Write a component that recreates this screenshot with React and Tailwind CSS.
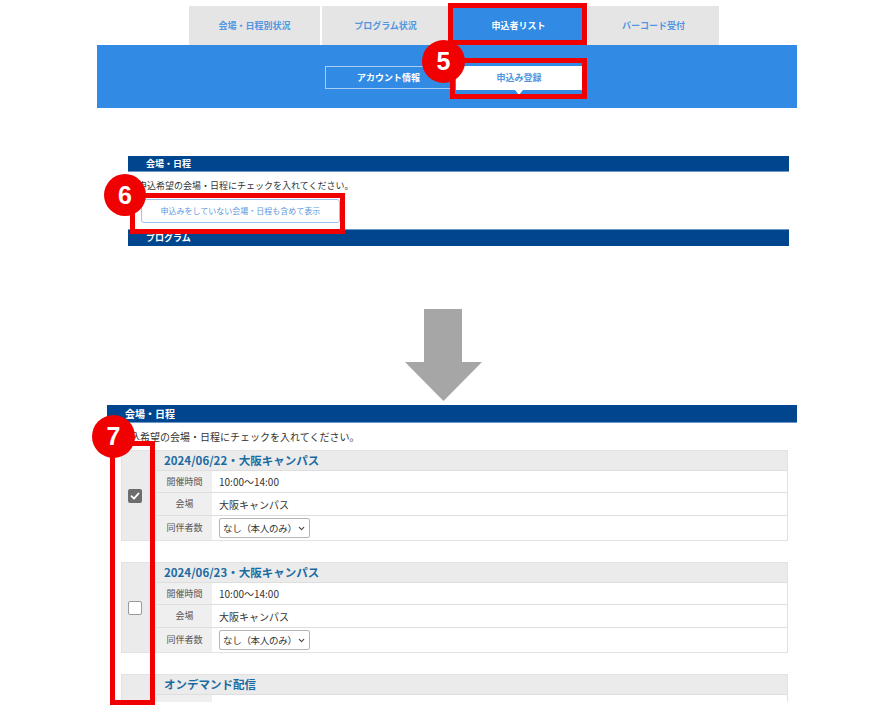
import React from 'react';
import { ChevronDown } from 'lucide-react';

const tabs = [
  { label: '会場・日程別状況', w: 'w-[131px]' },
  { label: 'プログラム状況', w: 'w-[127px]' },
  { label: '申込者リスト', w: 'w-[131px]', active: true },
  { label: 'バーコード受付', w: 'w-[131px]' },
];

function Marker({ n, className }) {
  return (
    <div className={`absolute rounded-full bg-[#f00000] text-white flex items-center justify-center font-['Liberation_Sans',Arial,sans-serif] font-bold text-[25px] leading-none ${className}`}>
      {n}
    </div>
  );
}

function CheckBox({ checked }) {
  if (checked) {
    return (
      <div className="w-[14px] h-[14px] rounded-[2px] bg-[#6d6d6d] flex items-center justify-center">
        <svg width="10" height="10" viewBox="0 0 10 10">
          <path d="M1.5 5.2 L4 7.6 L8.6 2.4" fill="none" stroke="#fff" strokeWidth="1.8" strokeLinecap="round" strokeLinejoin="round" />
        </svg>
      </div>
    );
  }
  return <div className="w-[14px] h-[14px] rounded-[2px] bg-white border border-[#9a9a9a]" />;
}

function Row({ label, children, h = 'h-[22px]', last }) {
  return (
    <div className={`flex ${h} ${last ? '' : 'border-b border-[#dedede]'}`}>
      <div className="w-[55px] shrink-0 bg-[#efefef] flex items-center justify-center text-[9px] text-[#555]">{label}</div>
      <div className="flex-1 bg-white flex items-center pl-[7px] text-[10px] text-[#333]">{children}</div>
    </div>
  );
}

function VenueCard({ title, checked, cut }) {
  return (
    <div className="flex w-[667px] bg-[#ebebeb] border border-[#e2e2e2]">
      <div className="w-[35px] shrink-0 flex items-center pl-[6px]">
        {!cut && <CheckBox checked={checked} />}
      </div>
      <div className="flex-1 flex flex-col">
        <div className="h-[20px] flex items-center pl-[7px] text-[11.5px] font-bold text-[#1b6ba3] border-b border-[#dedede]">{title}</div>
        {cut ? (
          <Row label="" h="h-[22px]" last>{''}</Row>
        ) : (
          <>
            <Row label="開催時間">10:00〜14:00</Row>
            <Row label="会場" h="h-[23px]">大阪キャンパス</Row>
            <Row label="同伴者数" h="h-[24px]" last>
              <div className="w-[91px] h-[20px] border border-[#b5b5b5] rounded-[2px] bg-white flex items-center justify-between pl-[3px] pr-[3px] text-[9.5px] text-[#333] whitespace-nowrap">
                <span className="tracking-[-0.3px]">なし（本人のみ）</span>
                <ChevronDown className="w-[9px] h-[9px] shrink-0 text-[#444]" strokeWidth={3} />
              </div>
            </Row>
          </>
        )}
      </div>
    </div>
  );
}

export default function App() {
  return (
    <div className="relative w-[894px] h-[720px] bg-white overflow-hidden font-['Noto_Sans_CJK_JP','Noto_Sans',sans-serif]">
      <div className="h-[702px] overflow-hidden">
        {/* top tabs */}
        <div className="flex pl-[189px] pt-[6px] gap-[2px]">
          {tabs.map((t, i) => (
            <div
              key={t.label}
              className={`${t.w} h-[39px] flex items-center justify-center text-[9px] font-bold ${i === 2 ? 'ml-[2px] mr-[2px]' : ''} ${t.active ? 'bg-[#318be4] text-white' : 'bg-[#e5e5e5] text-[#5096e0]'}`}
            >
              {t.label}
            </div>
          ))}
        </div>

        {/* blue bar */}
        <div className="ml-[97px] w-[700px] h-[63px] bg-[#318be4] flex pl-[228px] pt-[21px] gap-[4px]">
          <div className="w-[127px] h-[23px] border border-[#a9cdf3] flex items-center justify-center text-[9px] font-bold text-white">
            アカウント情報
          </div>
          <div className="relative w-[126px] h-[24px] bg-white flex items-center justify-center text-[9px] font-bold text-[#5096e0]">
            申込み登録
            <div className="absolute left-[59px] top-[24px] w-0 h-0 border-l-[4px] border-r-[4px] border-t-[5px] border-l-transparent border-r-transparent border-t-white" />
          </div>
        </div>

        {/* section (before) */}
        <div className="ml-[128px] w-[661px] mt-[48px]">
          <div className="h-[16px] bg-[#00468f] border-b border-[#6d97c8] flex items-center pl-[18px] text-[9px] font-bold text-white">会場・日程</div>
          <div className="pt-[7px] pl-[10px] text-[9px] leading-[14px] text-[#333]">申込希望の会場・日程にチェックを入れてください。</div>
          <div className="ml-[13px] mt-[6px] w-[199px] h-[24px] border border-[#9cc3ee] rounded-[3px] bg-white flex items-center justify-center text-[8px] text-[#5b98dc]">
            申込みをしていない会場・日程も含めて表示
          </div>
          <div className="mt-[6px] h-[17px] bg-[#00468f] border-t border-[#6d97c8] flex items-center pl-[18px] text-[9px] font-bold text-white">プログラム</div>
        </div>

        {/* arrow */}
        <div className="ml-[405px] mt-[63px]">
          <svg width="77" height="92" viewBox="0 0 77 92" className="block">
            <rect x="19" y="0" width="38" height="54" fill="#a6a6a6" />
            <polygon points="0,53 77,53 38.5,92" fill="#a6a6a6" />
          </svg>
        </div>

        {/* section (after) */}
        <div className="ml-[107px] w-[690px] mt-[4px]">
          <div className="h-[18px] bg-[#00468f] border-b border-[#6d97c8] flex items-center pl-[18px] text-[10px] font-bold text-white">会場・日程</div>
          <div className="pt-[7px] pl-[13px] text-[10px] leading-[14px] text-[#333]">申込希望の会場・日程にチェックを入れてください。</div>
          <div className="ml-[14px] mt-[6px] flex flex-col gap-[21px]">
            <VenueCard title="2024/06/22・大阪キャンパス" checked />
            <VenueCard title="2024/06/23・大阪キャンパス" />
            <VenueCard title="オンデマンド配信" cut />
          </div>
        </div>
      </div>

      {/* annotations */}
      <div className="absolute left-[448px] top-[3px] w-[139px] h-[42px] border-[5px] border-[#f00000]" />
      <div className="absolute left-[450px] top-[58px] w-[137px] h-[41px] border-[5px] border-[#f00000]" />
      <Marker n="5" className="left-[422px] top-[40px] w-[43px] h-[43px]" />

      <div className="absolute left-[130px] top-[193px] w-[215px] h-[41px] border-[5px] border-[#f00000]" />
      <Marker n="6" className="left-[104px] top-[174px] w-[42px] h-[42px]" />

      <div className="absolute left-[110px] top-[441px] w-[45px] h-[264px] border-[5px] border-[#f00000]" />
      <Marker n="7" className="left-[92px] top-[415px] w-[43px] h-[43px]" />
    </div>
  );
}
